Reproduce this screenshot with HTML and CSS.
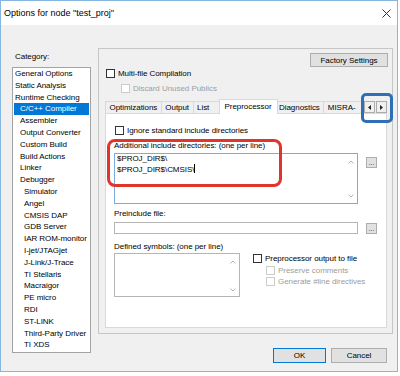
FILE: index.html
```html
<!DOCTYPE html>
<html lang="en">

	<head>

		<meta charset="utf-8">

		<title>Options for node "test_proj"</title>

		<link rel="stylesheet" href="styles.css">

	</head>

	<body>

		<div class="window">

			<div class="titlebar">
				<span class="title">Options for node "test_proj"</span>
				<svg class="close" width="9" height="9" viewBox="0 0 9 9"><path d="M0.5 0.5L8.5 8.5M8.5 0.5L0.5 8.5" stroke="#333333" stroke-width="1" fill="none"/></svg>
			</div>

			<div class="client">

				<div class="category">
					<div class="category-label">Category:</div>
					<div class="tree">
						<div class="item lvl0">General Options</div>
						<div class="item lvl0">Static Analysis</div>
						<div class="item lvl0">Runtime Checking</div>
						<div class="item lvl1 selected">C/C++ Compiler</div>
						<div class="item lvl1">Assembler</div>
						<div class="item lvl1">Output Converter</div>
						<div class="item lvl1">Custom Build</div>
						<div class="item lvl1">Build Actions</div>
						<div class="item lvl1">Linker</div>
						<div class="item lvl1">Debugger</div>
						<div class="item lvl2">Simulator</div>
						<div class="item lvl2">Angel</div>
						<div class="item lvl2">CMSIS DAP</div>
						<div class="item lvl2">GDB Server</div>
						<div class="item lvl2">IAR ROM-monitor</div>
						<div class="item lvl2">I-jet/JTAGjet</div>
						<div class="item lvl2">J-Link/J-Trace</div>
						<div class="item lvl2">TI Stellaris</div>
						<div class="item lvl2">Macraigor</div>
						<div class="item lvl2">PE micro</div>
						<div class="item lvl2">RDI</div>
						<div class="item lvl2">ST-LINK</div>
						<div class="item lvl2">Third-Party Driver</div>
						<div class="item lvl2">TI XDS</div>
					</div>
				</div>

				<div class="side">

					<div class="group">

						<div class="factory-row">
							<button class="btn factory">Factory Settings</button>
						</div>

						<div class="check multi"><span class="box"></span>Multi-file Compilation</div>
						<div class="check discard disabled"><span class="box"></span>Discard Unused Publics</div>

						<div class="tabbar">
							<div class="tab">Optimizations</div>
							<div class="tab">Output</div>
							<div class="tab list">List</div>
							<div class="tab active">Preprocessor</div>
							<div class="tab">Diagnostics</div>
							<div class="tab misra">MISRA-</div>
							<div class="spin">
								<div class="spin-btn"><svg width="3" height="5" viewBox="0 0 3 5"><path d="M3 0L0 2.5L3 5Z" fill="#222222"/></svg></div>
								<div class="spin-btn"><svg width="3" height="5" viewBox="0 0 3 5"><path d="M0 0L3 2.5L0 5Z" fill="#222222"/></svg></div>
							</div>
						</div>

						<div class="panel">

							<div class="check ignore"><span class="box"></span>Ignore standard include directories</div>

							<div class="label first">Additional include directories: (one per line)</div>
							<div class="field-row">
								<div class="field area focus">
									<div class="area-text">$PROJ_DIR$\<br>$PROJ_DIR$\CMSIS\<span class="caret"></span></div>
									<div class="scroll">
										<svg width="6" height="4" viewBox="0 0 6 4"><path d="M0.5 3.5L3 1L5.5 3.5" stroke="#b4b4b4" fill="none"/></svg>
										<svg width="6" height="4" viewBox="0 0 6 4"><path d="M0.5 0.5L3 3L5.5 0.5" stroke="#b4b4b4" fill="none"/></svg>
									</div>
								</div>
								<button class="dots">...</button>
							</div>

							<div class="label">Preinclude file:</div>
							<div class="field-row">
								<div class="field line"></div>
								<button class="dots line-dots">...</button>
							</div>

							<div class="label defined">Defined symbols: (one per line)</div>
							<div class="bottom-row">
								<div class="field symbols">
									<div class="area-text"></div>
									<div class="scroll">
										<svg width="6" height="4" viewBox="0 0 6 4"><path d="M0.5 3.5L3 1L5.5 3.5" stroke="#b4b4b4" fill="none"/></svg>
										<svg width="6" height="4" viewBox="0 0 6 4"><path d="M0.5 0.5L3 3L5.5 0.5" stroke="#b4b4b4" fill="none"/></svg>
									</div>
								</div>
								<div class="pp-options">
									<div class="check"><span class="box"></span>Preprocessor output to file</div>
									<div class="check sub disabled"><span class="box"></span>Preserve comments</div>
									<div class="check sub disabled"><span class="box"></span>Generate #line directives</div>
								</div>
							</div>

							<div class="mark-red"></div>

						</div>

						<div class="mark-blue"></div>

					</div>

					<div class="buttons">
						<button class="btn default">OK</button>
						<button class="btn cancel">Cancel</button>
					</div>

				</div>

			</div>

		</div>

	</body>

</html>
```

FILE: styles.css
```css
html, body {

	margin: 0;

	background: #ffffff;

	font-family: "Liberation Sans", Arial, sans-serif;
	font-size: 8px;
	letter-spacing: -0.05px;
	color: #000000;

}

.window {

	width: 398px;
	height: 372px;

	box-sizing: border-box;
	border: 1px solid #86b6e0;

	display: flex;
	flex-direction: column;

}

.titlebar {

	height: 24px;
	flex-shrink: 0;

	display: flex;
	align-items: center;
	justify-content: space-between;

	padding: 0 6px 0 3px;

	background: #ffffff;

}

.title {
	font-size: 9px;
	letter-spacing: 0;
}

.client {

	flex: 1;

	display: flex;
	gap: 7px;

	padding: 23px 4px 0 11px;

	background: #f0f0f0;

}

/* category tree */

.category {
	width: 79px;
	padding-top: 3px;
}

.category-label {
	line-height: 12px;
	padding-left: 3px;
}

.tree {
	margin-top: 4px;
	height: 286px;
	box-sizing: border-box;
	border: 1px solid #a3a3a3;
	background: #ffffff;
}

.item {
	height: 11.8px;
	line-height: 11.8px;
	white-space: nowrap;
}

.lvl0 { padding-left: 2px; }
.lvl1 { padding-left: 7px; }
.lvl2 { padding-left: 11px; }

.item.selected {
	margin: 0 1px;
	padding-left: 6px;
	background: #0078d7;
	color: #ffffff;
}

/* right side */

.side {
	display: flex;
	flex-direction: column;
}

.group {

	position: relative;

	width: 295px;
	height: 286px;
	box-sizing: border-box;

	display: flex;
	flex-direction: column;

	padding: 0 5px 5px 6px;

	border: 1px solid #c6c6c6;

}

.factory-row {
	display: flex;
	justify-content: flex-end;
	margin-top: 4px;
	margin-right: -1px;
}

.btn {
	font-family: inherit;
	font-size: inherit;
	letter-spacing: inherit;
	color: #000000;
	background: #e1e1e1;
	border: 1px solid #adadad;
	padding: 0;
	margin: 0;
}

.factory {
	width: 78px;
	height: 14px;
}

.check {
	display: flex;
	align-items: center;
	gap: 3px;
	height: 12px;
	white-space: nowrap;
}

.box {
	width: 7px;
	height: 7px;
	border: 1px solid #333333;
	background: #ffffff;
}

.check.disabled {
	color: #9d9d9d;
}

.check.disabled .box {
	border-color: #cccccc;
}

.multi {
	margin-left: 1px;
}

.discard {
	margin-top: 3px;
	margin-left: 16px;
}

/* tabs */

.tabbar {

	position: relative;
	z-index: 1;

	height: 15px;
	margin-top: 5px;
	margin-bottom: -1px;

	display: flex;
	align-items: flex-end;

	overflow: hidden;

}

.tab {
	height: 12px;
	box-sizing: border-box;
	margin-bottom: 1px;
	margin-left: -1px;
	padding: 0 3.5px;
	line-height: 11px;
	white-space: nowrap;
	border: 1px solid #d9d9d9;
	border-bottom: none;
	background: #f0f0f0;
}

.tab:first-child {
	margin-left: 0;
}

.tab.list {
	min-width: 28px;
}

.tab.active {
	position: relative;
	z-index: 1;
	height: 15px;
	margin: 0 -2px 0 -2px;
	padding: 1px 5px 0 5px;
	background: #ffffff;
}

.tab.misra {
	padding-right: 30px;
}

.spin {
	position: absolute;
	z-index: 2;
	right: 0;
	top: 2px;
	display: flex;
}

.spin-btn {
	width: 11px;
	height: 12px;
	box-sizing: border-box;
	border: 1px solid #adadad;
	background: #f0f0f0;
	display: flex;
	align-items: center;
	justify-content: center;
	margin-left: 1px;
}

/* tab page */

.panel {

	position: relative;

	flex: 1;

	display: flex;
	flex-direction: column;

	padding: 10px 9px 0 8px;

	border: 1px solid #d9d9d9;
	background: #ffffff;

}

.ignore {
	margin-left: 1px;
}

.label {
	height: 12px;
	line-height: 12px;
	margin-top: 4px;
}

.label.defined {
	margin-top: 7px;
}

.field-row {
	display: flex;
	align-items: flex-start;
	margin-top: 1px;
}

.field {
	flex: 1;
	box-sizing: border-box;
	border: 1px solid #b5b5b5;
	background: #ffffff;
	display: flex;
}

.field.area {
	height: 51px;
}

.field.focus {
	border-color: #79acdf;
}

.field.line {
	height: 12px;
	margin-top: 1px;
}

.area-text {
	flex: 1;
	padding: 0 0 0 2px;
	line-height: 10px;
}

.caret {
	display: inline-block;
	width: 1px;
	height: 9px;
	background: #000000;
	vertical-align: -1px;
}

.scroll {
	width: 12px;
	display: flex;
	flex-direction: column;
	justify-content: space-between;
	align-items: center;
	padding: 6px 0 5px 0;
}

.dots {
	width: 11px;
	height: 11px;
	margin: 4px 0 0 8px;
	padding: 0;
	box-sizing: border-box;
	border: 1px solid #adadad;
	background: #e1e1e1;
	font-family: inherit;
	font-size: 7px;
	line-height: 8px;
	color: #333333;
}

.dots.line-dots {
	margin-top: 2px;
}

.bottom-row {
	display: flex;
	gap: 13px;
}

.field.symbols {
	flex: none;
	width: 126px;
	height: 44px;
}

.field.symbols .scroll {
	padding: 6px 0 4px 0;
}

.pp-options .check {
	height: 11.5px;
}

.pp-options .check.sub {
	margin-left: 13px;
}

/* annotation marks */

.mark-red {
	position: absolute;
	left: 1px;
	top: 25px;
	width: 175px;
	height: 48px;
	box-sizing: border-box;
	border: 3px solid #e0352b;
	border-radius: 8px;
}

.mark-blue {
	position: absolute;
	z-index: 2;
	left: 262px;
	top: 44px;
	width: 32px;
	height: 30px;
	box-sizing: border-box;
	border: 3px solid #2f6fb5;
	border-radius: 5px;
}

/* dialog buttons */

.buttons {
	display: flex;
	justify-content: flex-end;
	gap: 5px;
	margin-top: 14px;
	padding-right: 6px;
}

.buttons .btn {
	height: 15px;
}

.default {
	width: 53px;
	border-color: #0078d7;
}

.cancel {
	width: 56px;
}
```
